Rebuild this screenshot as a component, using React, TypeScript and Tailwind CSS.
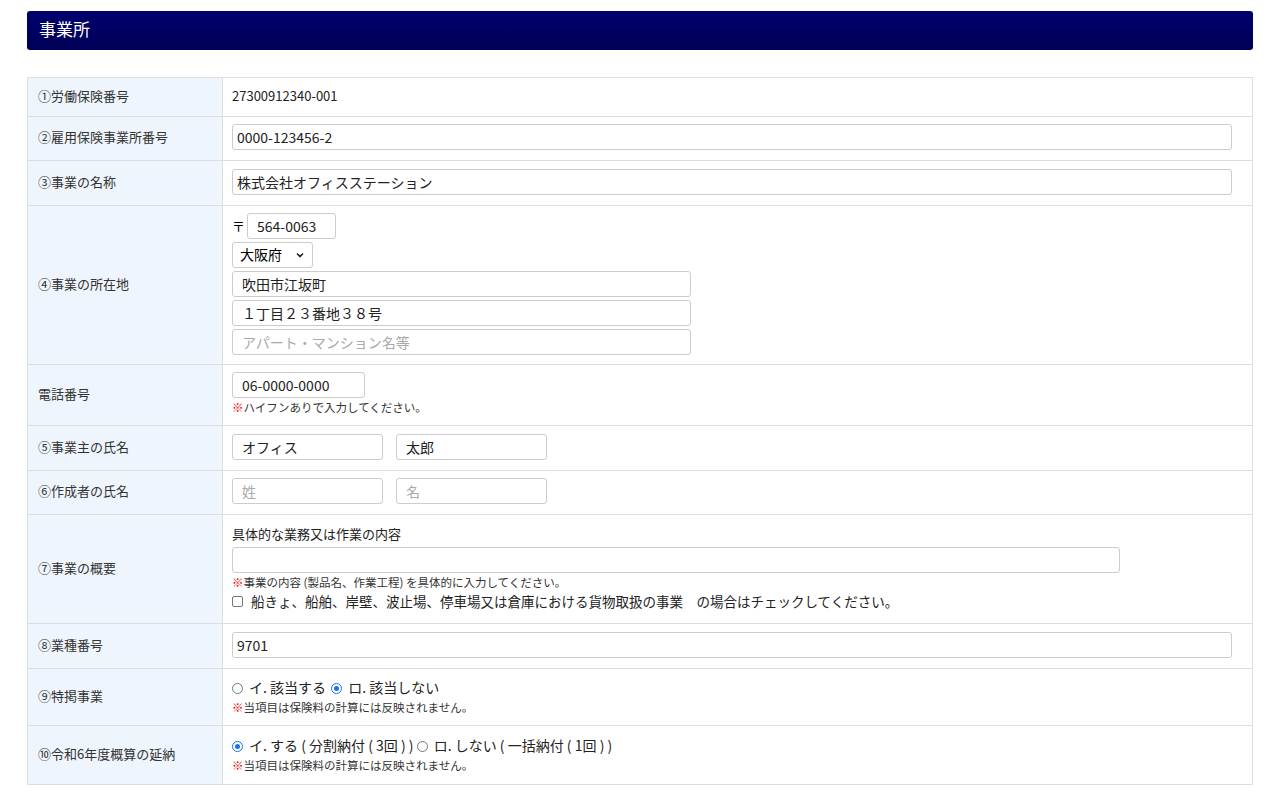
import React from "react";

const inp = "h-[26px] border border-[#ccc] rounded-[3px] px-[4px] text-[14px] text-[#222] outline-none placeholder:text-[#aaa] bg-white";

function Note({ children }: { children: React.ReactNode }) {
  return <div className="text-[11.5px] text-[#333] leading-[16px] mt-[1px]"><span className="text-[#e00]">※</span>{children}</div>;
}

function Radio({ on }: { on?: boolean }) {
  return <span className={`inline-block w-[11px] h-[11px] rounded-full border ${on ? "border-[#1a73e8]" : "border-[#777]"} relative mr-[6px] align-[-1px]`}>{on && <span className="absolute left-[2px] top-[2px] w-[5px] h-[5px] rounded-full bg-[#1a73e8]" />}</span>;
}

function Row({ label, h, children }: { label: string; h: string; children: React.ReactNode }) {
  return (
    <div className={`flex border-b border-[#ddd] ${h}`}>
      <div className="w-[195px] shrink-0 bg-[#eef5fc] border-r border-[#ddd] flex items-center pl-[10px] pb-[3px] text-[13px] text-[#333]">{label}</div>
      <div className="flex-1 flex flex-col justify-center pl-[9px] pb-[3px]">{children}</div>
    </div>
  );
}

export default function App() {
  return (
    <div className="bg-white w-[1280px] h-[792px] pt-[11px] px-[27px]" style={{ fontFamily: '"Noto Sans CJK JP", "Liberation Sans", sans-serif' }}>
      <div className="h-[39px] rounded-[3px] bg-gradient-to-b from-[#000070] to-[#000055] text-white text-[17px] flex items-center pl-[12px] pb-[3px]">事業所</div>
      <div className="mt-[27px] border border-[#ddd] border-b-0">
        <Row label="①労働保険番号" h="h-[39px]"><div className="text-[13px] text-[#222]">27300912340-001</div></Row>
        <Row label="②雇用保険事業所番号" h="h-[44px]"><input className={`${inp} w-[1000px]`} defaultValue="0000-123456-2" /></Row>
        <Row label="③事業の名称" h="h-[45px]"><input className={`${inp} w-[1000px]`} defaultValue="株式会社オフィスステーション" /></Row>
        <Row label="④事業の所在地" h="h-[159px]">
          <div className="flex flex-col gap-[3px]">
            <div className="flex items-center text-[13px]"><span className="mr-[2px]">〒</span><input className={`${inp} w-[89px] px-[9px]`} defaultValue="564-0063" /></div>
            <div className="w-[81px] h-[26px] border border-[#ccc] rounded-[3px] flex items-center justify-between px-[7px] text-[14px]"><span>大阪府</span><svg width="10" height="10" viewBox="0 0 10 10"><path d="M2 3.5l3 3 3-3" stroke="#222" strokeWidth="1.6" fill="none"/></svg></div>
            <input className={`${inp} w-[459px] px-[9px]`} defaultValue="吹田市江坂町" />
            <input className={`${inp} w-[459px] px-[9px]`} defaultValue="１丁目２３番地３８号" />
            <input className={`${inp} w-[459px] px-[9px]`} placeholder="アパート・マンション名等" />
          </div>
        </Row>
        <Row label="電話番号" h="h-[61px]">
          <input className={`${inp} w-[133px] px-[9px]`} defaultValue="06-0000-0000" />
          <Note>ハイフンありで入力してください。</Note>
        </Row>
        <Row label="⑤事業主の氏名" h="h-[45px]"><div className="flex gap-[13px]"><input className={`${inp} w-[151px] px-[9px]`} defaultValue="オフィス" /><input className={`${inp} w-[151px] px-[9px]`} defaultValue="太郎" /></div></Row>
        <Row label="⑥作成者の氏名" h="h-[44px]"><div className="flex gap-[13px]"><input className={`${inp} w-[151px] px-[9px]`} placeholder="姓" /><input className={`${inp} w-[151px] px-[9px]`} placeholder="名" /></div></Row>
        <Row label="⑦事業の概要" h="h-[109px]">
          <div className="text-[13px] text-[#222] mb-[4px]">具体的な業務又は作業の内容</div>
          <input className={`${inp} w-[888px]`} />
          <Note>事業の内容 (製品名、作業工程) を具体的に入力してください。</Note>
          <div className="flex items-center text-[13.5px] text-[#222] mt-[1px]"><span className="inline-block w-[11px] h-[11px] border border-[#777] rounded-[2px] mr-[8px]" />船きょ、船舶、岸壁、波止場、停車場又は倉庫における貨物取扱の事業　の場合はチェックしてください。</div>
        </Row>
        <Row label="⑧業種番号" h="h-[45px]"><input className={`${inp} w-[1000px]`} defaultValue="9701" /></Row>
        <Row label="⑨特掲事業" h="h-[57px]">
          <div className="text-[14px] text-[#222]"><Radio />イ. 該当する <span className="ml-[2px]" /><Radio on />ロ. 該当しない</div>
          <Note>当項目は保険料の計算には反映されません。</Note>
        </Row>
        <Row label="⑩令和6年度概算の延納" h="h-[59px]">
          <div className="text-[14px] text-[#222]"><Radio on />イ. する ( 分割納付 ( 3回 ) ) <Radio />ロ. しない ( 一括納付 ( 1回 ) )</div>
          <Note>当項目は保険料の計算には反映されません。</Note>
        </Row>
      </div>
    </div>
  );
}
